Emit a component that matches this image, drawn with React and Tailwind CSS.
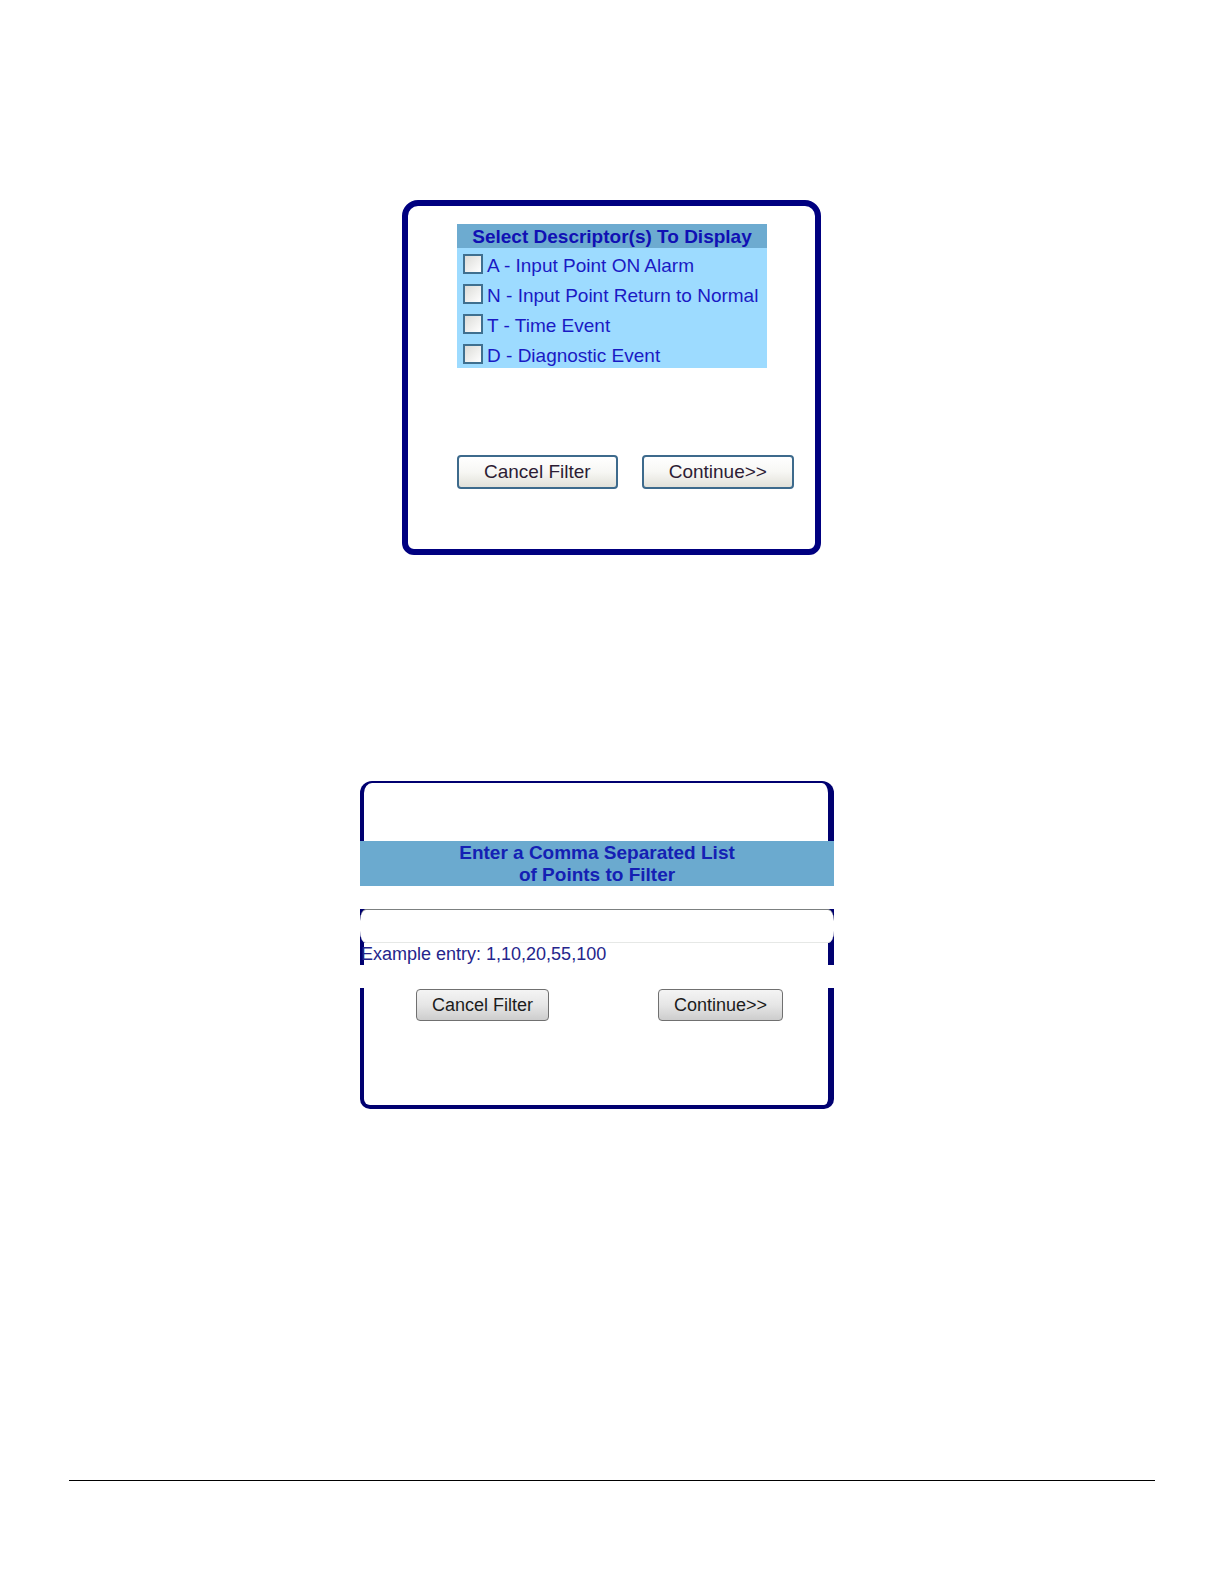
import React, { useState } from 'react';

const DESCRIPTORS = [
  { code: 'A', label: 'Input Point ON Alarm' },
  { code: 'N', label: 'Input Point Return to Normal' },
  { code: 'T', label: 'Time Event' },
  { code: 'D', label: 'Diagnostic Event' },
];

const DescriptorFilter = () => {
  const [selected, setSelected] = useState([]);

  const toggle = (code) => {
    setSelected((prev) =>
      prev.includes(code) ? prev.filter((c) => c !== code) : [...prev, code]
    );
  };

  const buttonClass =
    'h-[34px] rounded-[4px] border-2 border-[#3d6a8c] bg-linear-to-b from-white via-[#f7f7f4] to-[#e2e1d9] px-[25px] text-[19px] leading-[28px] text-[#2c1c34] whitespace-nowrap';

  return (
    <form
      onSubmit={(e) => e.preventDefault()}
      className="w-full max-w-[419px] rounded-t-[16px] rounded-b-[12px] border-6 border-[#000080] pt-[18px] pb-[60px] pl-[49px]"
    >
      <fieldset className="w-[310px] bg-[#9ddbff] text-[#1a1ac4]">
        <legend className="w-full bg-[#6dabd0] pt-[2px] text-center text-[19px] leading-[22px] font-bold text-[#1010b4]">
          Select Descriptor(s) To Display
        </legend>
        {DESCRIPTORS.map(({ code, label }) => (
          <label key={code} className="flex h-[30px] items-center gap-1 pt-[2px] pl-[6px] text-[19px] leading-[22px] whitespace-nowrap">
            <input
              type="checkbox"
              checked={selected.includes(code)}
              onChange={() => toggle(code)}
              className="size-5 shrink-0 appearance-none border-2 border-[#3f7090] bg-linear-to-br from-[#dcdcd8] to-white checked:bg-none checked:bg-[#21a121]"
            />
            <span className="pt-[3px]">{code} - {label}</span>
          </label>
        ))}
      </fieldset>

      <div className="mt-[87px] flex gap-6">
        <button type="button" className={buttonClass} onClick={() => setSelected([])}>
          Cancel Filter
        </button>
        <button type="submit" className={buttonClass}>
          Continue&gt;&gt;
        </button>
      </div>
    </form>
  );
};

const PointFilter = () => {
  const [points, setPoints] = useState('');

  const buttonClass =
    'h-[32px] rounded-[4px] border border-[#707070] bg-linear-to-b from-[#f4f4f4] via-[#e6e6e6] to-[#cdcdcd] px-[15px] text-[18px] leading-[28px] text-[#1c1c1c] whitespace-nowrap';

  return (
    <form onSubmit={(e) => e.preventDefault()} className="w-full max-w-[474px]">
      <div className="h-[60px] rounded-t-[12px] border-t-2 border-r-6 border-l-4 border-[#000070]" />
      <h2 className="bg-[#6baacf] pt-px text-center text-[19px] leading-[22px] font-bold text-[#1420b4]">
        Enter a Comma Separated List
        <br />
        of Points to Filter
      </h2>

      {/* the frame shows behind the rounded corners of the text box */}
      <div className="mt-[23px] bg-[#000070]">
        <input
          id="points"
          type="text"
          value={points}
          onChange={(e) => setPoints(e.target.value)}
          className="block h-[34px] w-full rounded-[6px/12px] border-t border-b border-t-[#7c8080] border-b-[#e6e8e6] bg-white px-2 text-[18px] text-[#25258c] outline-none"
        />
      </div>
      <div className="border-r-6 border-l-4 border-[#000070]">
        <label htmlFor="points" className="-ml-[3px] block text-[18px] leading-[22px] text-[#25258c]">
          Example entry: 1,10,20,55,100
        </label>
      </div>

      <div className="mt-[23px] flex items-start justify-between rounded-b-[10px] border-r-6 border-b-4 border-l-4 border-[#000070] pt-[1px] pr-[45px] pb-[84px] pl-[52px]">
        <button type="button" className={buttonClass} onClick={() => setPoints('')}>
          Cancel Filter
        </button>
        <button type="submit" className={buttonClass}>
          Continue&gt;&gt;
        </button>
      </div>
    </form>
  );
};

const App = () => {
  return (
    <main className="min-h-screen bg-white px-[69px] pt-[200px] font-['Liberation_Sans',Arial,sans-serif]">
      <div className="flex justify-center pr-px">
        <DescriptorFilter />
      </div>
      <div className="mt-[226px] flex justify-center pr-[30px]">
        <PointFilter />
      </div>
      <hr className="mt-[371px] border-t border-black" />
    </main>
  );
};

export default App;
